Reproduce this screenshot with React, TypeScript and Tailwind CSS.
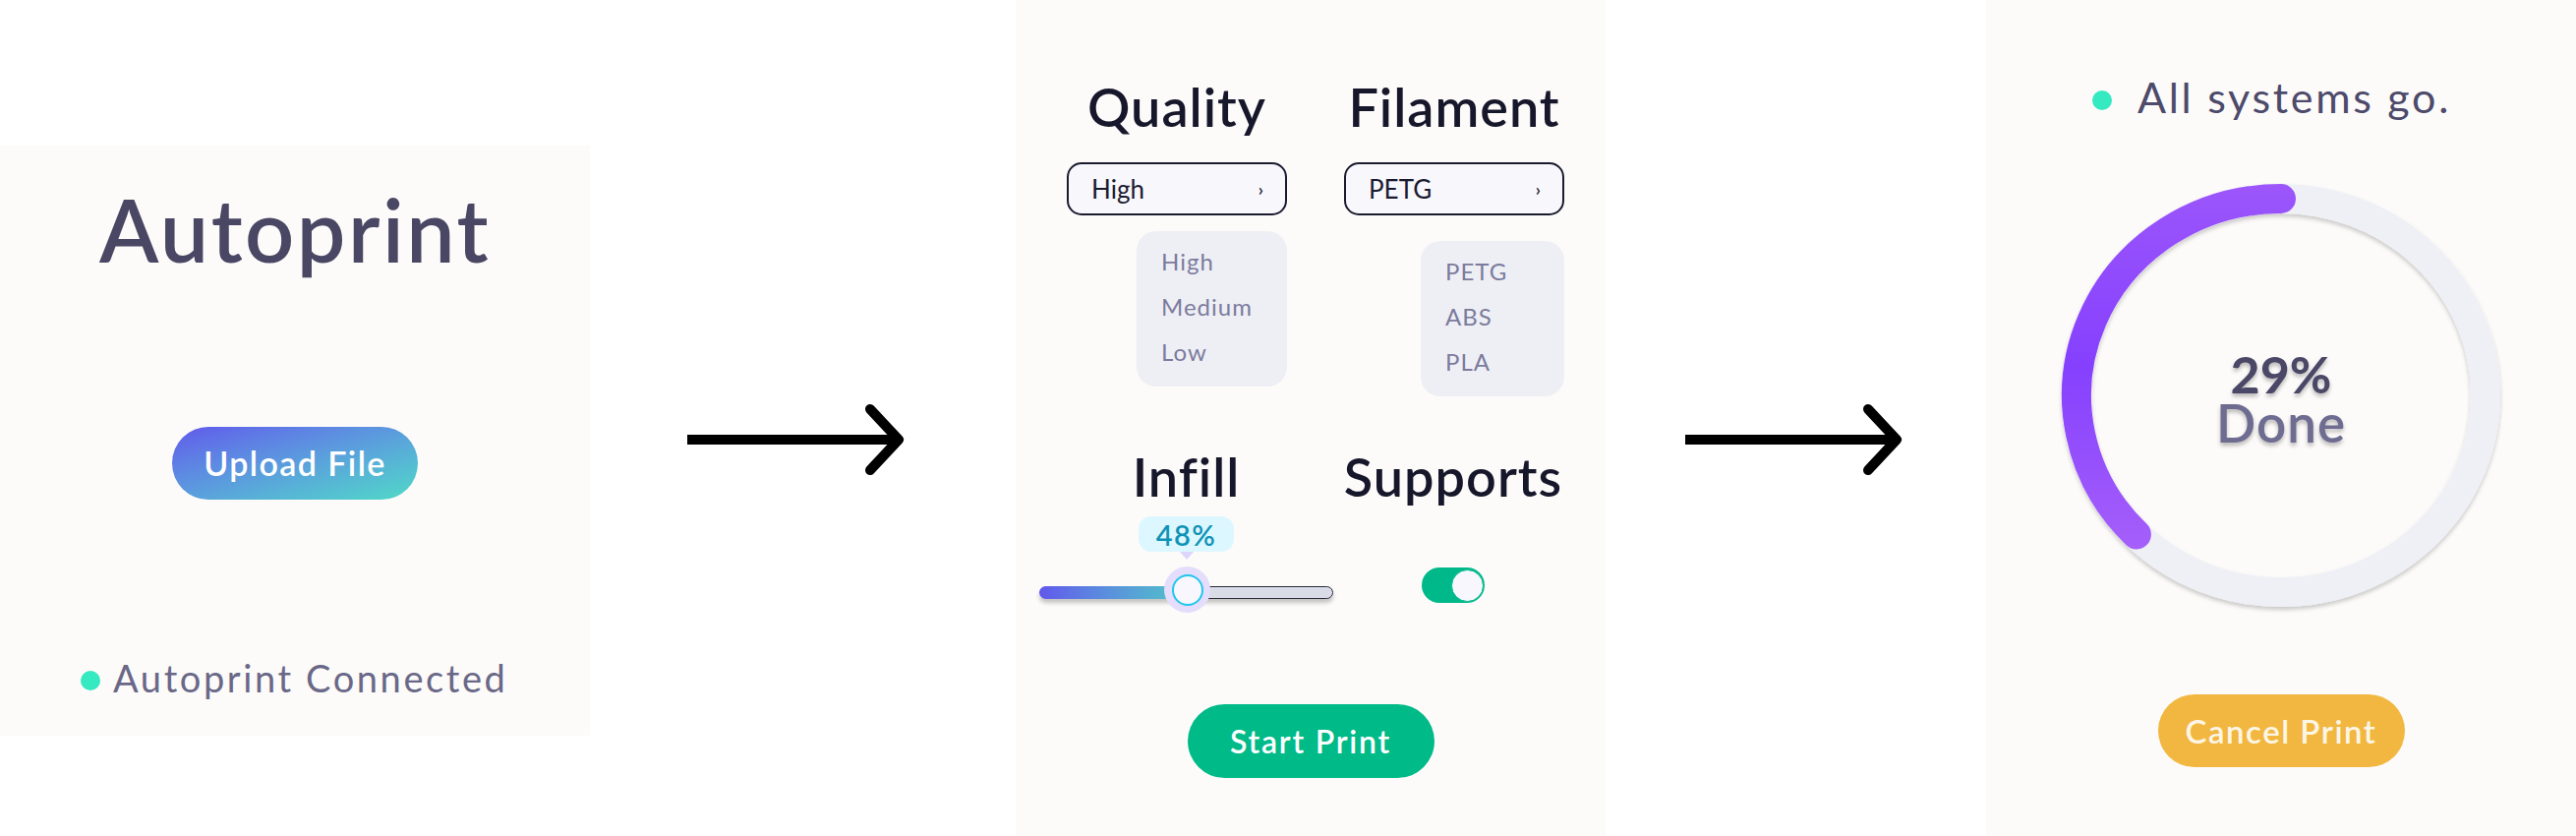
import React from "react";

function Arrow() {
  return (
    <svg width="222" height="80" viewBox="0 0 222 80" fill="none">
      <line x1="0" y1="40" x2="212" y2="40" stroke="#000" strokeWidth="10" />
      <polyline
        points="186,9 215,40 186,71"
        stroke="#000"
        strokeWidth="10"
        strokeLinecap="round"
        strokeLinejoin="round"
      />
    </svg>
  );
}

function Picker({
  title,
  value,
  items,
  listWidth,
  listTop,
}: {
  title: string;
  value: string;
  items: string[];
  listWidth: string;
  listTop: string;
}) {
  return (
    <div className="w-[224px] flex flex-col items-center">
      <h2 className="text-[54px] leading-none font-semibold tracking-[1px] text-[#17172b]">{title}</h2>
      <div className="mt-[29px] w-full h-[54px] rounded-[15px] border-2 border-[#1b1b2f] bg-[#f7f7fc] flex items-center justify-between pl-[23px] pr-[22px]">
        <span className="text-[26px] leading-none text-[#1b1b2f]">{value}</span>
        <span className="text-[18px] leading-none font-semibold text-[#1b1b2f]">›</span>
      </div>
      <div className={`self-end ${listWidth} ${listTop} h-[158px] rounded-[20px] bg-[#eeeff5] pt-[8px] pl-[25px]`}>
        {items.map((it) => (
          <div key={it} className="text-[24px] leading-[46px] tracking-[1px] text-[#7c7b9d]">
            {it}
          </div>
        ))}
      </div>
    </div>
  );
}

export default function App() {
  return (
    <div className="w-[2620px] h-[850px] bg-white flex items-start overflow-hidden font-['Lato',sans-serif]">
      {/* Panel 1 */}
      <div className="w-[600px] h-[600px] mt-[148px] bg-[#fcfbf9] shrink-0 flex flex-col items-center">
        <h1 className="mt-[41px] text-[88px] leading-none font-semibold tracking-[2.5px] text-[#4a4764]">Autoprint</h1>
        <button className="mt-[157px] w-[250px] h-[74px] rounded-full bg-linear-to-br from-[#6157eb] to-[#4fd9c6] text-white text-[34px] font-semibold tracking-[1.4px] leading-none">
          Upload File
        </button>
        <div className="mt-[162px] self-start ml-[82px] flex items-center">
          <span className="mt-[6px] w-[20px] h-[20px] rounded-full bg-[#35e9c0]" />
          <span className="ml-[13px] text-[38px] leading-none tracking-[2.6px] text-[#6a6888]">Autoprint Connected</span>
        </div>
      </div>

      {/* Arrow 1 */}
      <div className="w-[433px] h-[850px] shrink-0 pt-[407px] pl-[99px]">
        <Arrow />
      </div>

      {/* Panel 2 */}
      <div className="w-[600px] h-[850px] bg-[#fcfbf9] shrink-0 flex flex-col">
        <div className="flex items-start pt-[82px] pl-[52px] gap-[58px]">
          <Picker title="Quality" value="High" items={["High", "Medium", "Low"]} listWidth="w-[153px]" listTop="mt-[16px]" />
          <Picker title="Filament" value="PETG" items={["PETG", "ABS", "PLA"]} listWidth="w-[146px]" listTop="mt-[26px]" />
        </div>

        <div className="flex items-start mt-[55px] pl-[24px]">
          <div className="w-[299px] flex flex-col">
            <h2 className="text-center text-[54px] leading-none font-semibold tracking-[1px] text-[#17172b]">Infill</h2>
            <div className="relative h-[113px]">
              <div className="absolute left-[101px] top-[13px] w-[97px] h-[36px] rounded-[13px] bg-[#dcf7ff] flex items-center justify-center">
                <span className="text-[29px] leading-none font-semibold tracking-[1.5px] text-[#0e93b6]">48%</span>
              </div>
              <div className="absolute left-[143px] top-[49px] w-0 h-0 border-l-[7px] border-r-[7px] border-t-[8px] border-l-transparent border-r-transparent border-t-[#ddd5fb]" />
              <div className="mt-[84px] h-[13px] w-full flex rounded-full shadow-[0_4px_4px_rgba(0,0,0,0.22)]">
                <div className="w-[150px] h-full rounded-l-full bg-linear-to-r from-[#6157eb] to-[#4ec5c6]" />
                <div className="flex-1 h-full rounded-r-full bg-[#d9dbe7] border border-[#2a2a3a]" />
              </div>
              <div className="absolute left-[127px] top-[64px] w-[47px] h-[47px] rounded-full bg-[#e4ddfb] flex items-center justify-center">
                <div className="w-[32px] h-[32px] rounded-full bg-[#f7f7fd] border-[2.5px] border-[#20c7ef]" />
              </div>
            </div>
          </div>
          <div className="w-[244px] flex flex-col items-center">
            <h2 className="text-[54px] leading-none font-semibold tracking-[1px] text-[#17172b]">Supports</h2>
            <div className="mt-[65px] w-[64px] h-[36px] rounded-full bg-[#00b98a] flex items-center justify-end pr-[1px]">
              <div className="w-[33px] h-[33px] rounded-full bg-[#f7f7fd] border-[1.5px] border-[#00b98a]" />
            </div>
          </div>
        </div>

        <button className="self-center mt-[91px] w-[251px] h-[75px] rounded-full bg-[#00ba88] text-white text-[32px] font-semibold tracking-[1.8px] leading-none">
          Start Print
        </button>
      </div>

      {/* Arrow 2 */}
      <div className="w-[387px] h-[850px] shrink-0 pt-[407px] pl-[81px]">
        <Arrow />
      </div>

      {/* Panel 3 */}
      <div className="w-[600px] h-[850px] bg-[#fcfbf9] shrink-0 flex flex-col items-center">
        <div className="mt-[77px] self-start ml-[108px] flex items-center">
          <span className="mt-[7px] w-[20px] h-[20px] rounded-full bg-[#35e9c0]" />
          <span className="ml-[26px] text-[43px] leading-none tracking-[2.7px] text-[#4d4a6b]">All systems go.</span>
        </div>

        <div className="relative mt-[67px] w-[446px] h-[430px]">
          <svg width="446" height="430" viewBox="0 0 446 430" fill="none" overflow="visible">
            <defs>
              <filter id="ringShadow" x="-10%" y="-10%" width="120%" height="120%">
                <feDropShadow dx="0" dy="3" stdDeviation="2" floodColor="#000" floodOpacity="0.2" />
              </filter>
              <linearGradient id="arcGrad" x1="0" y1="0" x2="0" y2="370" gradientUnits="userSpaceOnUse">
                <stop offset="0" stopColor="#9c56fb" />
                <stop offset="0.5" stopColor="#8540fe" />
                <stop offset="1" stopColor="#a55ffa" />
              </linearGradient>
            </defs>
            <ellipse cx="223" cy="215" rx="208" ry="200" stroke="#eff0f6" strokeWidth="30" filter="url(#ringShadow)" />
            <path
              d="M 223 15 A 208 200 0 0 0 75.9 356.4"
              stroke="url(#arcGrad)"
              strokeWidth="30"
              strokeLinecap="round"
            />
          </svg>
          <div className="absolute inset-0 flex flex-col items-center justify-center pt-[6px]">
            <span className="text-[52px] leading-[49px] font-bold text-[#4a4767] [text-shadow:0_3px_4px_rgba(0,0,0,0.28)]">29%</span>
            <span className="text-[53px] leading-[49px] font-semibold tracking-[1px] text-[#6e6c90] [text-shadow:0_3px_4px_rgba(0,0,0,0.28)]">Done</span>
          </div>
        </div>

        <button className="mt-[89px] w-[251px] h-[74px] rounded-full bg-[#f2b740] text-[#fdf6e6] text-[33px] font-semibold tracking-[1.5px] leading-none">
          Cancel Print
        </button>
      </div>
    </div>
  );
}
